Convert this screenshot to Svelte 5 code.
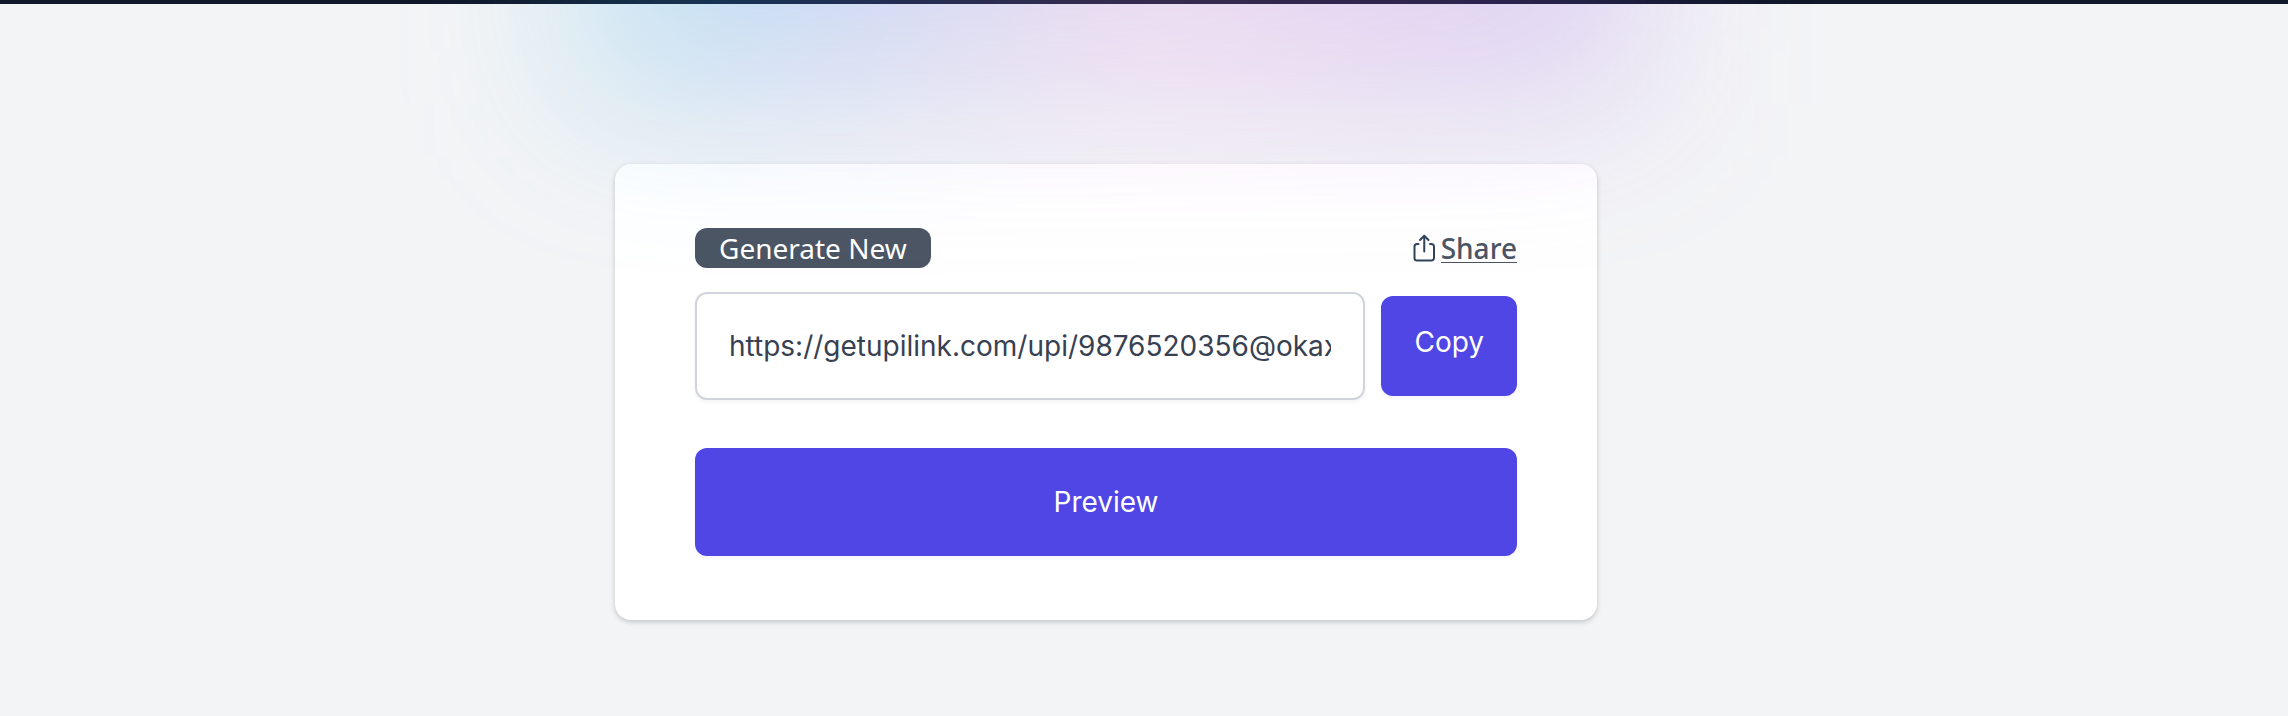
<script>
  let link = $state('https://getupilink.com/upi/9876520356@okaxis');

  function copyLink() {
    navigator.clipboard?.writeText(link);
  }
</script>

<div class="page">
  <div class="topbar"></div>
  <div class="glow" aria-hidden="true"></div>
  <main>
    <section class="card">
      <div class="actions">
        <button type="button" class="generate">Generate New</button>
        <a class="share" href="#share">
          <svg viewBox="0 0 24 28" width="24" height="28" fill="none" stroke="#2f4358" stroke-width="2" stroke-linecap="round" stroke-linejoin="round" aria-hidden="true">
            <path d="M5.500 10H4a2.500 2.500 0 0 0-2.500 2.500v11.500a2.500 2.500 0 0 0 2.500 2.500h14.500a2.500 2.500 0 0 0 2.500-2.500V12.500a2.500 2.500 0 0 0-2.500-2.500H17" />
            <path d="M11.250 17.500V2M7 6l4.250-4.250L15.500 6" />
          </svg>
          <span>Share</span>
        </a>
      </div>
      <div class="link-row">
        <input type="text" aria-label="Payment link" bind:value={link} />
        <button type="button" class="primary copy" onclick={copyLink}>Copy</button>
      </div>
      <button type="button" class="primary preview">Preview</button>
    </section>
  </main>
</div>

<style>
  :global(body) {
    margin: 0;
    background: #f3f4f6;
  }

  .page {
    position: relative;
    box-sizing: border-box;
    min-height: 100vh;
    overflow: hidden;
    background: #f3f4f6;
    font-family: Inter, sans-serif;
    font-size: 28px;
    line-height: 40px;
  }

  .topbar {
    height: 4px;
    background: #0f172a;
  }

  .glow {
    position: absolute;
    z-index: 1;
    top: -400px;
    left: 0;
    right: 76px;
    width: 1080px;
    height: 504px;
    margin: 0 auto;
    background: linear-gradient(
      104deg,
      rgba(70, 190, 215, 0.12) 5%,
      rgba(40, 175, 232, 0.24) 14%,
      rgba(67, 135, 237, 0.24) 26%,
      rgba(219, 129, 227, 0.22) 56%,
      rgba(160, 91, 231, 0.22) 82%,
      rgba(140, 91, 231, 0.2) 100%
    );
    filter: blur(80px);
    pointer-events: none;
  }

  main {
    padding: 160px 76px 96px 0;
  }

  .card {
    box-sizing: border-box;
    max-width: 982px;
    margin: 0 auto;
    padding: 64px 80px;
    border-radius: 16px;
    background: #fff;
    box-shadow: 0 2px 6px rgba(0, 0, 0, 0.1), 0 2px 4px rgba(0, 0, 0, 0.1);
  }

  .actions {
    display: flex;
    align-items: center;
    justify-content: space-between;
    margin-bottom: 24px;
    font-family: "Noto Sans", sans-serif;
  }

  button,
  input {
    box-sizing: border-box;
    margin: 0;
    border: 0;
    border-radius: 12px;
    font: inherit;
  }

  button {
    color: #fff;
    cursor: pointer;
  }

  .generate {
    padding: 0 24px;
    background: #4b5563;
  }

  .share {
    display: flex;
    align-items: flex-start;
    gap: 4px;
    height: 36px;
    color: #4b5563;
    font-weight: 500;
    text-decoration: none;
  }

  .share svg {
    margin-top: 4px;
  }

  .share span {
    height: 32px;
    border-bottom: 1px solid #4b5563;
    line-height: 36px;
  }

  .link-row {
    display: flex;
    align-items: center;
    gap: 16px;
    margin-bottom: 48px;
  }

  input {
    flex: 1;
    min-width: 0;
    height: 108px;
    padding: 0 32px;
    border: 2px solid #d1d5db;
    background: #fff;
    color: #374151;
    box-shadow: 0 2px 4px rgba(0, 0, 0, 0.05);
    font-feature-settings: "calt" 0, "liga" 0;
  }

  .primary {
    background: #4f46e5;
    box-shadow: 0 2px 4px rgba(0, 0, 0, 0.05);
  }

  .copy {
    padding: 26px 33px 34px;
  }

  .preview {
    display: block;
    width: 100%;
    padding: 34px 32px;
  }
</style>
